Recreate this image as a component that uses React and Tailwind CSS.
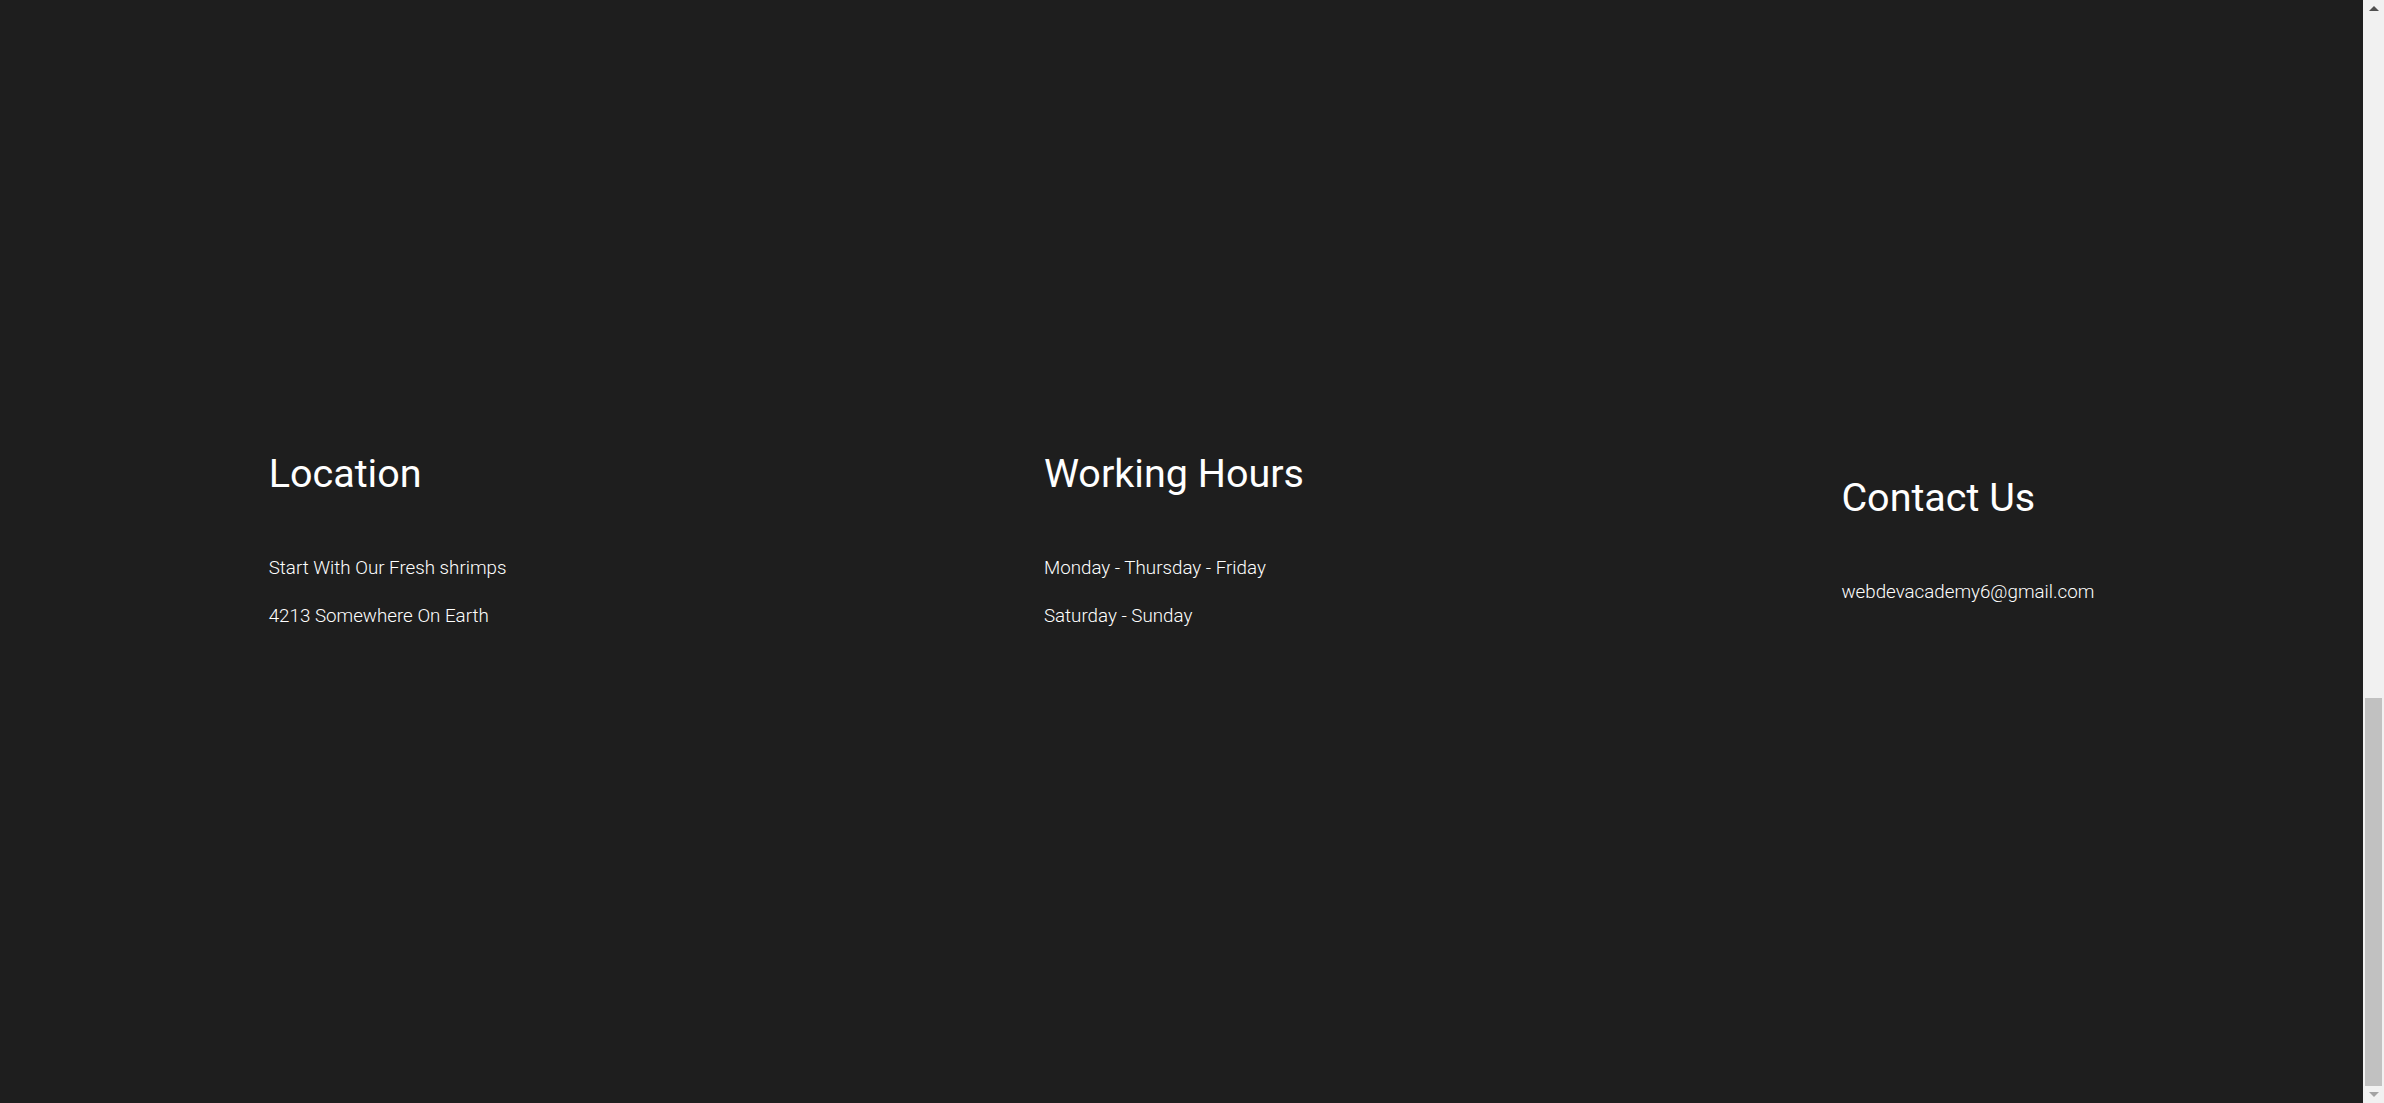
const columns = [
  { title: "Location", lines: ["Start With Our Fresh shrimps", "4213 Somewhere On Earth"] },
  { title: "Working Hours", lines: ["Monday - Thursday - Friday", "Saturday - Sunday"] },
  { title: "Contact Us", lines: ["webdevacademy6@gmail.com"] },
];

function Scrollbar() {
  return (
    <div className="w-[21px] h-[1103px] bg-[#f1f1f1] flex flex-col items-center shrink-0">
      <div className="h-[17px] w-full flex items-center justify-center">
        <div className="w-0 h-0 border-l-[5px] border-r-[5px] border-b-[5px] border-l-transparent border-r-transparent border-b-[#505050]"></div>
      </div>
      <div className="flex-1 w-full flex flex-col justify-end px-[2px]">
        <div className="h-[388px] bg-[#c1c1c1]"></div>
      </div>
      <div className="h-[17px] w-full flex items-center justify-center">
        <div className="w-0 h-0 border-l-[5px] border-r-[5px] border-t-[5px] border-l-transparent border-r-transparent border-t-[#a3a3a3]"></div>
      </div>
    </div>
  );
}

export default function App() {
  return (
    <div className="flex w-full h-[1103px] bg-[#1e1e1e] overflow-hidden font-['Roboto',sans-serif] text-white">
      <footer className="flex-1 flex items-center justify-around pb-[24px]">
        {columns.map((col) => (
          <div key={col.title} className="flex flex-col">
            <h2 className="text-[39.5px] leading-[46px] font-normal mb-[59px]">{col.title}</h2>
            <div className="flex flex-col gap-6">
              {col.lines.map((line) => (
                <p key={line} className="text-[18.75px] leading-[24px] font-light">{line}</p>
              ))}
            </div>
          </div>
        ))}
      </footer>
      <Scrollbar />
    </div>
  );
}
